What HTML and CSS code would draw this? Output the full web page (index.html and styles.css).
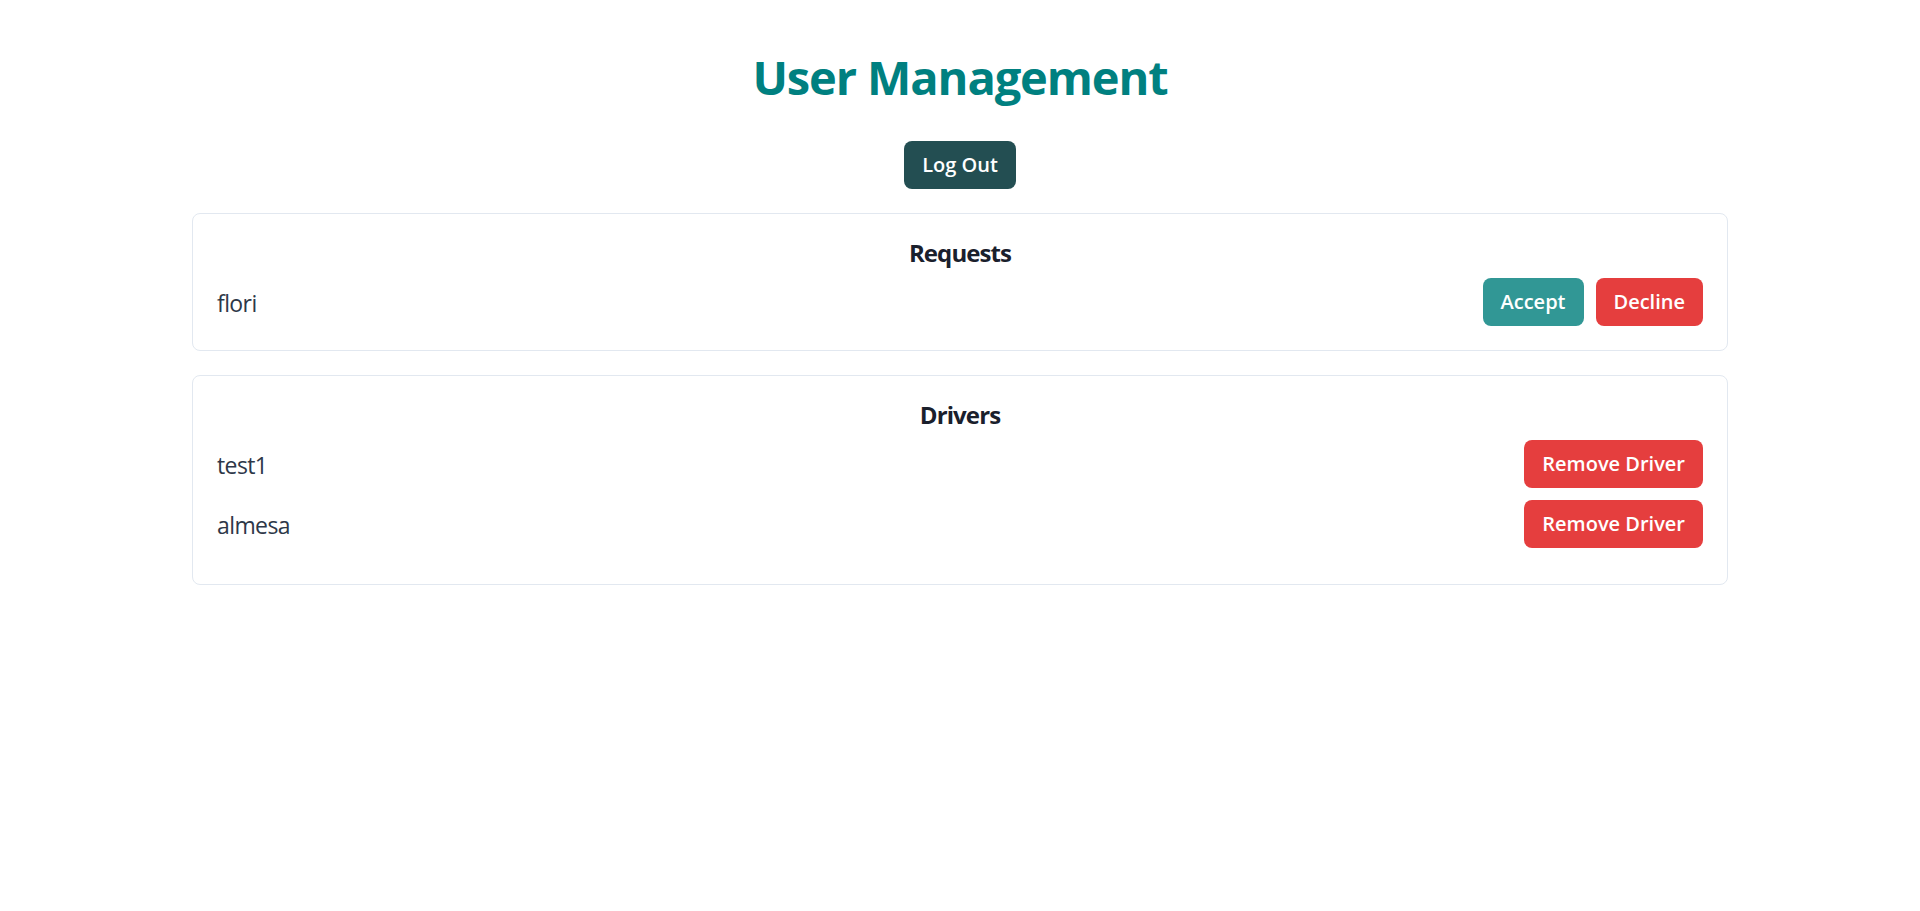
FILE: index.html
```html
<!DOCTYPE html>
<html lang="en">
<head>
<meta charset="utf-8">
<title>User Management</title>
<link rel="stylesheet" href="styles.css">
</head>
<body>
<main class="page">
  <h1 class="title">User Management</h1>
  <div class="logout-wrap">
    <button class="btn btn-dark">Log Out</button>
  </div>
  <section class="card">
    <h2 class="card-title">Requests</h2>
    <div class="row">
      <span class="name">flori</span>
      <div class="actions">
        <button class="btn btn-teal">Accept</button>
        <button class="btn btn-red">Decline</button>
      </div>
    </div>
  </section>
  <section class="card">
    <h2 class="card-title">Drivers</h2>
    <div class="list">
      <div class="row">
        <span class="name">test1</span>
        <div class="actions">
          <button class="btn btn-red">Remove Driver</button>
        </div>
      </div>
      <div class="row">
        <span class="name">almesa</span>
        <div class="actions">
          <button class="btn btn-red">Remove Driver</button>
        </div>
      </div>
    </div>
  </section>
</main>
</body>
</html>
```
FILE: styles.css
```css
* { box-sizing: border-box; }
html, body {
  margin: 0;
  padding: 0;
  background: #ffffff;
}
body {
  font-family: "Open Sans", "Noto Sans", "Liberation Sans", sans-serif;
  color: #1a202c;
}
.page {
  max-width: 1536px;
  margin: 0 auto;
  padding-top: 53px;
}
.title {
  margin: 0;
  text-align: center;
  font-size: 47px;
  line-height: 48px;
  font-weight: 700;
  letter-spacing: -1.1px;
  color: #008080;
}
.logout-wrap {
  display: flex;
  justify-content: center;
  margin-top: 40px;
  margin-bottom: 24px;
}
.btn {
  font-family: inherit;
  font-size: 20px;
  line-height: 28px;
  font-weight: 600;
  color: #ffffff;
  border: none;
  border-radius: 8px;
  padding: 10px 18px;
  cursor: pointer;
}
.btn-dark { background: #234e52; }
.btn-teal { background: #319795; }
.btn-red { background: #e53e3e; }
.card {
  border: 1px solid #e2e8f0;
  border-radius: 8px;
  padding: 24px;
  margin-bottom: 24px;
}
.card-title {
  margin: 0 0 12px;
  padding-top: 1px;
  text-align: center;
  font-size: 24px;
  line-height: 27px;
  font-weight: 700;
  letter-spacing: -0.9px;
  color: #1a202c;
}
.list {
  display: flex;
  flex-direction: column;
  gap: 12px;
  padding-bottom: 12px;
}
.row {
  display: flex;
  justify-content: space-between;
  align-items: center;
}
.name {
  font-size: 23px;
  line-height: 32px;
  letter-spacing: -0.6px;
  padding-top: 2px;
  color: #2d3748;
}
.actions {
  display: flex;
  gap: 12px;
}
```
